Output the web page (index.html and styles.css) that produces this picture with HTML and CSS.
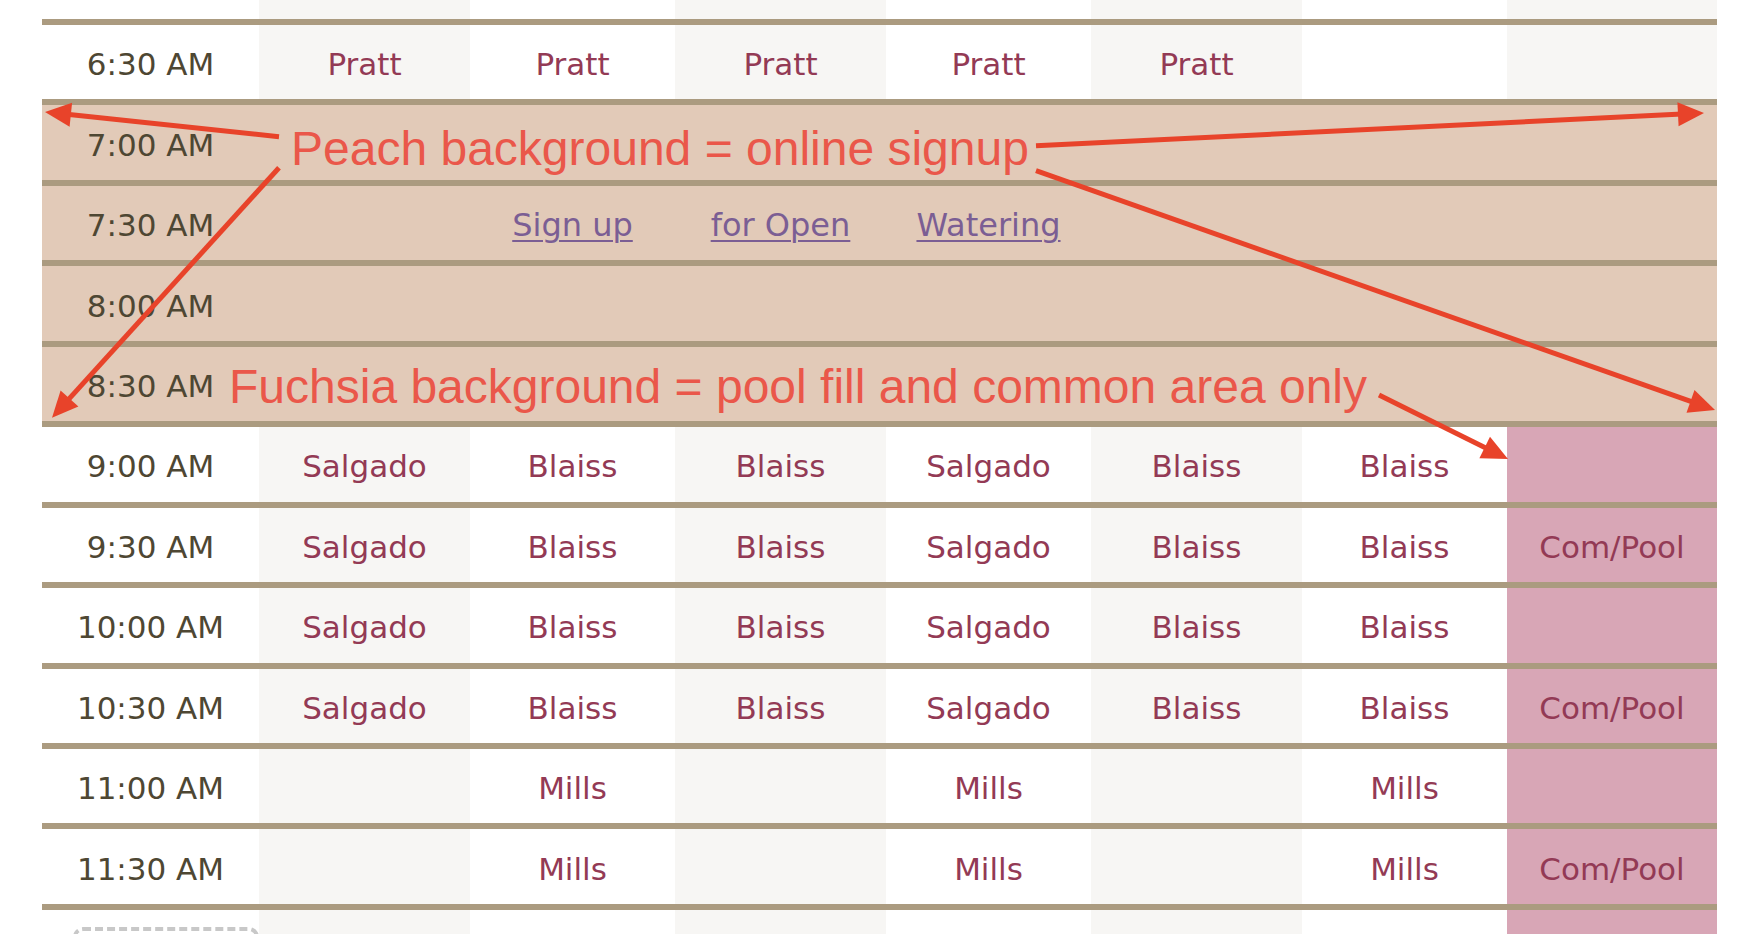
FILE: index.html
```html
<!DOCTYPE html>
<html lang="en">
<head>
<meta charset="utf-8">
<title>Watering schedule</title>
<link rel="stylesheet" href="styles.css">
</head>
<body>
<div class="page">
  <div class="sched">
    <div class="row lead">
      <div class="cell time"></div><div class="cell odd"></div><div class="cell"></div><div class="cell odd"></div><div class="cell"></div><div class="cell odd"></div><div class="cell"></div><div class="cell odd"></div>
    </div>
    <div class="row">
      <div class="cell time">6:30 AM</div><div class="cell odd">Pratt</div><div class="cell">Pratt</div><div class="cell odd">Pratt</div><div class="cell">Pratt</div><div class="cell odd">Pratt</div><div class="cell"></div><div class="cell odd"></div>
    </div>
    <div class="row peach">
      <div class="cell time">7:00 AM</div><div class="cell"></div><div class="cell"></div><div class="cell"></div><div class="cell"></div><div class="cell"></div><div class="cell"></div><div class="cell"></div>
    </div>
    <div class="row peach">
      <div class="cell time">7:30 AM</div><div class="cell"></div><div class="cell"><a href="#" class="link">Sign up</a></div><div class="cell"><a href="#" class="link">for Open</a></div><div class="cell"><a href="#" class="link">Watering</a></div><div class="cell"></div><div class="cell"></div><div class="cell"></div>
    </div>
    <div class="row peach">
      <div class="cell time">8:00 AM</div><div class="cell"></div><div class="cell"></div><div class="cell"></div><div class="cell"></div><div class="cell"></div><div class="cell"></div><div class="cell"></div>
    </div>
    <div class="row peach">
      <div class="cell time">8:30 AM</div><div class="cell"></div><div class="cell"></div><div class="cell"></div><div class="cell"></div><div class="cell"></div><div class="cell"></div><div class="cell"></div>
    </div>
    <div class="row">
      <div class="cell time">9:00 AM</div><div class="cell odd">Salgado</div><div class="cell">Blaiss</div><div class="cell odd">Blaiss</div><div class="cell">Salgado</div><div class="cell odd">Blaiss</div><div class="cell">Blaiss</div><div class="cell pool"></div>
    </div>
    <div class="row">
      <div class="cell time">9:30 AM</div><div class="cell odd">Salgado</div><div class="cell">Blaiss</div><div class="cell odd">Blaiss</div><div class="cell">Salgado</div><div class="cell odd">Blaiss</div><div class="cell">Blaiss</div><div class="cell pool">Com/Pool</div>
    </div>
    <div class="row">
      <div class="cell time">10:00 AM</div><div class="cell odd">Salgado</div><div class="cell">Blaiss</div><div class="cell odd">Blaiss</div><div class="cell">Salgado</div><div class="cell odd">Blaiss</div><div class="cell">Blaiss</div><div class="cell pool"></div>
    </div>
    <div class="row">
      <div class="cell time">10:30 AM</div><div class="cell odd">Salgado</div><div class="cell">Blaiss</div><div class="cell odd">Blaiss</div><div class="cell">Salgado</div><div class="cell odd">Blaiss</div><div class="cell">Blaiss</div><div class="cell pool">Com/Pool</div>
    </div>
    <div class="row">
      <div class="cell time">11:00 AM</div><div class="cell odd"></div><div class="cell">Mills</div><div class="cell odd"></div><div class="cell">Mills</div><div class="cell odd"></div><div class="cell">Mills</div><div class="cell pool"></div>
    </div>
    <div class="row">
      <div class="cell time">11:30 AM</div><div class="cell odd"></div><div class="cell">Mills</div><div class="cell odd"></div><div class="cell">Mills</div><div class="cell odd"></div><div class="cell">Mills</div><div class="cell pool">Com/Pool</div>
    </div>
    <div class="row tail">
      <div class="cell time"><div class="dashbox"></div></div><div class="cell odd"></div><div class="cell"></div><div class="cell odd"></div><div class="cell"></div><div class="cell odd"></div><div class="cell"></div><div class="cell pool"></div>
    </div>
  </div>

  <div class="note note-peach">Peach background = online signup</div>
  <div class="note note-fuchsia">Fuchsia background = pool fill and common area only</div>

  <svg class="arrows" width="1752" height="934" viewBox="0 0 1752 934" xmlns="http://www.w3.org/2000/svg">
    <g stroke="#e8432a" stroke-width="5" fill="none">
      <line x1="279" y1="136.7" x2="66.9" y2="114.3"/>
      <line x1="1036" y1="145.7" x2="1682" y2="114.1"/>
      <line x1="279" y1="167.7" x2="66.8" y2="401.4"/>
      <line x1="1036" y1="170.7" x2="1694.3" y2="402.7"/>
      <line x1="1379" y1="395" x2="1488.3" y2="449.2"/>
    </g>
    <g fill="#e8432a">
      <polygon points="45,112 72.1,102.8 69.6,126.7"/>
      <polygon points="1704,113 1678.6,126.3 1677.4,102.3"/>
      <polygon points="52,417.7 78.4,406.5 60.6,390.4"/>
      <polygon points="1715,410 1686.5,412.7 1694.5,390"/>
      <polygon points="1508,459 1479.4,458.2 1490,436.7"/>
    </g>
  </svg>
</div>
</body>
</html>
```

FILE: styles.css
```css
html, body {
  margin: 0;
  padding: 0;
  background: #ffffff;
  overflow: hidden;
}

.page {
  position: relative;
  width: 1752px;
  height: 934px;
  overflow: hidden;
}

.sched {
  margin-left: 42px;
  width: 1675px;
  display: flex;
  flex-direction: column;
  font-family: "DejaVu Sans", Verdana, sans-serif;
  font-size: 31px;
}

.row {
  display: grid;
  grid-template-columns: 217px 211px 205px 211px 205px 211px 205px 210px;
  height: 74.45px;
  border-top: 6px solid #ab9b80;
}

.row.lead {
  height: 19px;
  border-top: none;
}

.row.tail {
  height: 40px;
}

.row.peach {
  background: #e2cab8;
}

.cell {
  display: flex;
  align-items: center;
  justify-content: center;
  padding-top: 4px;
  box-sizing: border-box;
  color: #933a55;
  white-space: nowrap;
}

.cell.time {
  color: #4e4733;
}

.cell.odd {
  background: #f7f6f4;
}

.cell.pool {
  background: #d8a6b6;
}

.row.tail .cell.time {
  align-items: flex-start;
  justify-content: flex-start;
  padding-top: 17px;
}

.dashbox {
  margin-left: 31px;
  width: 196px;
  height: 40px;
  border: 4px dashed #c8c8c8;
  border-radius: 10px;
  box-sizing: border-box;
}

.link {
  font-size: 32px;
  color: #7b5e94;
  text-decoration: underline;
  text-underline-offset: 4px;
  text-decoration-thickness: 2px;
}

.note {
  position: absolute;
  font-family: "Liberation Sans", Arial, sans-serif;
  font-size: 48px;
  line-height: 48px;
  color: #ea574a;
  white-space: nowrap;
}

.note-peach {
  left: 291px;
  top: 125px;
}

.note-fuchsia {
  left: 229px;
  top: 363px;
}

.arrows {
  position: absolute;
  left: 0;
  top: 0;
}
```
